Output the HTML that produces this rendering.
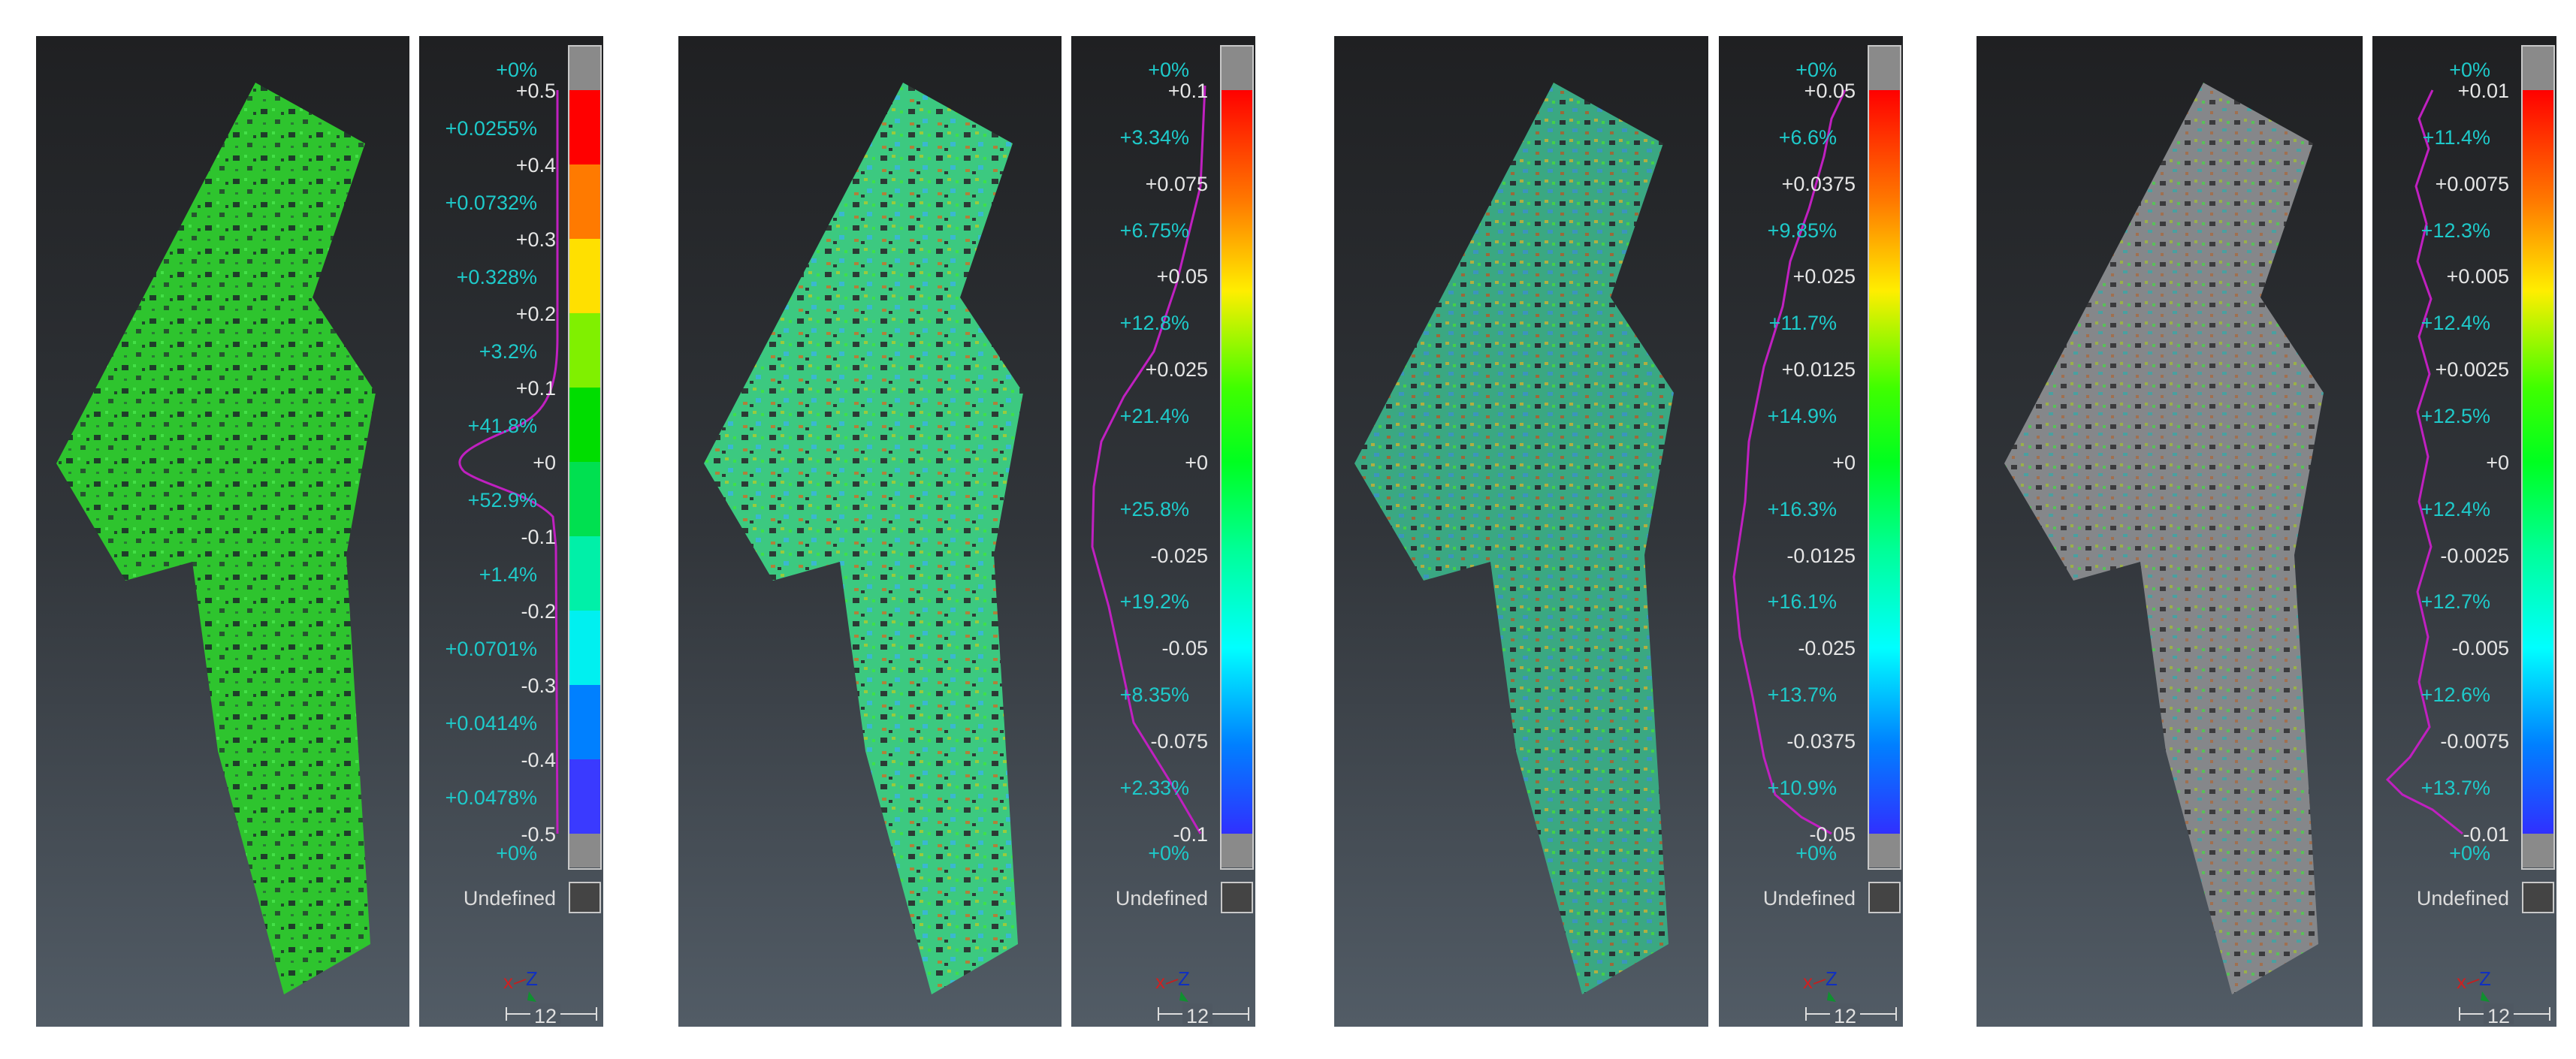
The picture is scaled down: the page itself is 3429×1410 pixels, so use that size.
<!DOCTYPE html>
<html><head><meta charset="utf-8"><style>html,body{margin:0;padding:0;background:#fff}svg{display:block}</style></head>
<body>
<svg width="3429" height="1410" viewBox="0 0 3429 1410" xmlns="http://www.w3.org/2000/svg" font-family="Liberation Sans, sans-serif">
<defs>
<linearGradient id="bg" x1="0" y1="0" x2="0" y2="1"><stop offset="0" stop-color="#1f2022"/><stop offset="0.5" stop-color="#31353a"/><stop offset="1" stop-color="#525c66"/></linearGradient>
<linearGradient id="cb" x1="0" y1="0" x2="0" y2="1">
<stop offset="0" stop-color="#ff0000"/><stop offset="0.15" stop-color="#ff7a00"/><stop offset="0.27" stop-color="#ffee00"/><stop offset="0.4" stop-color="#40ff00"/><stop offset="0.5" stop-color="#00ff20"/><stop offset="0.62" stop-color="#00ff99"/><stop offset="0.75" stop-color="#00ffff"/><stop offset="0.88" stop-color="#0080ff"/><stop offset="1" stop-color="#3030ff"/></linearGradient>
<pattern id="p1" width="37" height="31" patternUnits="userSpaceOnUse"><rect width="37" height="31" fill="#2ec42e"/><rect x="3" y="4" width="9" height="7" fill="#1f3d2a"/><rect x="22" y="18" width="7" height="6" fill="#26552f"/><rect x="18" y="3" width="4" height="4" fill="#44e048"/><rect x="6" y="22" width="4" height="3" fill="#2a7a35"/><rect x="30" y="8" width="4" height="4" fill="#1f4a2a"/></pattern>
<pattern id="p2" width="37" height="31" patternUnits="userSpaceOnUse"><rect width="37" height="31" fill="#3cc980"/><rect x="3" y="4" width="9" height="7" fill="#2c3a34"/><rect x="22" y="17" width="7" height="6" fill="#3ab8d0"/><rect x="18" y="3" width="5" height="4" fill="#9acb3c"/><rect x="5" y="22" width="6" height="4" fill="#b0803a"/><rect x="29" y="6" width="4" height="4" fill="#3ee04a"/><rect x="14" y="25" width="5" height="4" fill="#2d3b36"/></pattern>
<pattern id="p3" width="33" height="27" patternUnits="userSpaceOnUse"><rect width="33" height="27" fill="#3aa882"/><rect x="3" y="4" width="8" height="6" fill="#2b3232"/><rect x="20" y="15" width="7" height="5" fill="#3b95bd"/><rect x="16" y="2" width="5" height="4" fill="#b0b040"/><rect x="4" y="19" width="5" height="4" fill="#9a6a3a"/><rect x="26" y="5" width="4" height="4" fill="#44d04a"/></pattern>
<pattern id="p4" width="33" height="27" patternUnits="userSpaceOnUse"><rect width="33" height="27" fill="#85878a"/><rect x="3" y="4" width="8" height="6" fill="#3a3a3c"/><rect x="20" y="15" width="6" height="4" fill="#4aa0a0"/><rect x="16" y="2" width="4" height="4" fill="#9ab04a"/><rect x="4" y="19" width="4" height="4" fill="#a07050"/><rect x="26" y="5" width="4" height="4" fill="#5abf5a"/></pattern>
<g id="shape"><polygon points="292,62 438,143 368,348 452,475 413,691 445,1209 330,1276 242,952 208,700 119,725 27,569"/></g>
<g id="legbase">
<rect x="0" y="0" width="245" height="1319" fill="url(#bg)"/>
<rect x="199" y="13" width="43" height="1096" fill="none" stroke="#c8c8c8" stroke-width="2"/>
<rect x="200" y="14" width="41" height="58" fill="#8a8a8a"/>
<rect x="200" y="1062" width="41" height="45" fill="#8a8a8a"/>
<rect x="200" y="1127" width="41" height="40" fill="#444" stroke="#c8c8c8" stroke-width="2"/>
<text x="182" y="1157" font-size="27" fill="#dcdcdc" text-anchor="end">Undefined</text>
<text x="112" y="1268" font-size="26" fill="#d02020">x</text>
<line x1="126" y1="1262" x2="142" y2="1256" stroke="#c02020" stroke-width="2"/>
<text x="142" y="1264" font-size="26" fill="#1030c0">Z</text>
<path d="M146 1272 l10 14 l-12 -2 z" fill="#109030"/>
<line x1="116" y1="1302" x2="236" y2="1302" stroke="#ddd" stroke-width="2"/>
<line x1="116" y1="1293" x2="116" y2="1311" stroke="#ddd" stroke-width="2"/>
<line x1="236" y1="1293" x2="236" y2="1311" stroke="#ddd" stroke-width="2"/>
<rect x="148" y="1288" width="40" height="28" fill="#4f5862"/>
<text x="168" y="1314" font-size="27" fill="#e0e0e0" text-anchor="middle">12</text>
</g>
</defs>

<rect x="48" y="48" width="497" height="1319" fill="url(#bg)"/>
<g transform="translate(48,48)" fill="url(#p1)"><use href="#shape"/></g>
<g transform="translate(558,48)">
<use href="#legbase"/>
<rect x="200" y="72" width="41" height="99" fill="#ff0000"/>
<rect x="200" y="171" width="41" height="99" fill="#ff7a00"/>
<rect x="200" y="270" width="41" height="99" fill="#ffe000"/>
<rect x="200" y="369" width="41" height="99" fill="#80f000"/>
<rect x="200" y="468" width="41" height="99" fill="#00dd00"/>
<rect x="200" y="567" width="41" height="99" fill="#00e050"/>
<rect x="200" y="666" width="41" height="99" fill="#00f0a8"/>
<rect x="200" y="765" width="41" height="99" fill="#00f0f0"/>
<rect x="200" y="864" width="41" height="99" fill="#0080ff"/>
<rect x="200" y="963" width="41" height="99" fill="#3a3aff"/>
<path d="M184 72 L184 400 C184 470 170 500 130 520 C70 545 40 560 60 580 C90 600 150 610 178 640 L182 680 L184 1062" fill="none" stroke="#c020c0" stroke-width="3"/>
<g font-size="27" fill="#e6e6e6" text-anchor="end">
<text x="182" y="82">+0.5</text><text x="182" y="181">+0.4</text><text x="182" y="280">+0.3</text><text x="182" y="379">+0.2</text><text x="182" y="478">+0.1</text><text x="182" y="577">+0</text><text x="182" y="676">-0.1</text><text x="182" y="775">-0.2</text><text x="182" y="874">-0.3</text><text x="182" y="973">-0.4</text><text x="182" y="1072">-0.5</text></g>
<g font-size="27" fill="#1ecaca" text-anchor="end">
<text x="157" y="54">+0%</text><text x="157" y="132">+0.0255%</text><text x="157" y="231">+0.0732%</text><text x="157" y="330">+0.328%</text><text x="157" y="429">+3.2%</text><text x="157" y="528">+41.8%</text><text x="157" y="627">+52.9%</text><text x="157" y="726">+1.4%</text><text x="157" y="825">+0.0701%</text><text x="157" y="924">+0.0414%</text><text x="157" y="1023">+0.0478%</text><text x="157" y="1097">+0%</text></g>
</g>

<rect x="903" y="48" width="510" height="1319" fill="url(#bg)"/>
<g transform="translate(910,48)" fill="url(#p2)"><use href="#shape"/></g>
<g transform="translate(1426,48)">
<use href="#legbase"/>
<rect x="200" y="72" width="41" height="990" fill="url(#cb)"/>
<polyline points="178,66 172,200 140,330 110,420 70,480 40,540 30,600 28,680 50,760 83,914 130,990 172,1062" fill="none" stroke="#c020c0" stroke-width="3"/>
<g font-size="27" fill="#e6e6e6" text-anchor="end">
<text x="182" y="82">+0.1</text><text x="182" y="206">+0.075</text><text x="182" y="329">+0.05</text><text x="182" y="453">+0.025</text><text x="182" y="577">+0</text><text x="182" y="701">-0.025</text><text x="182" y="824">-0.05</text><text x="182" y="948">-0.075</text><text x="182" y="1072">-0.1</text></g>
<g font-size="27" fill="#1ecaca" text-anchor="end">
<text x="157" y="54">+0%</text><text x="157" y="144">+3.34%</text><text x="157" y="268">+6.75%</text><text x="157" y="391">+12.8%</text><text x="157" y="515">+21.4%</text><text x="157" y="639">+25.8%</text><text x="157" y="762">+19.2%</text><text x="157" y="886">+8.35%</text><text x="157" y="1010">+2.33%</text><text x="157" y="1097">+0%</text></g>
</g>

<rect x="1776" y="48" width="498" height="1319" fill="url(#bg)"/>
<g transform="translate(1776,48)" fill="url(#p3)"><use href="#shape"/></g>
<g transform="translate(2288,48)">
<use href="#legbase"/>
<rect x="200" y="72" width="41" height="990" fill="url(#cb)"/>
<polyline points="168,72 150,110 140,160 120,230 95,300 85,360 60,440 40,540 35,620 20,720 28,800 45,880 60,960 75,1010 110,1040 150,1062" fill="none" stroke="#c020c0" stroke-width="3"/>
<g font-size="27" fill="#e6e6e6" text-anchor="end">
<text x="182" y="82">+0.05</text><text x="182" y="206">+0.0375</text><text x="182" y="329">+0.025</text><text x="182" y="453">+0.0125</text><text x="182" y="577">+0</text><text x="182" y="701">-0.0125</text><text x="182" y="824">-0.025</text><text x="182" y="948">-0.0375</text><text x="182" y="1072">-0.05</text></g>
<g font-size="27" fill="#1ecaca" text-anchor="end">
<text x="157" y="54">+0%</text><text x="157" y="144">+6.6%</text><text x="157" y="268">+9.85%</text><text x="157" y="391">+11.7%</text><text x="157" y="515">+14.9%</text><text x="157" y="639">+16.3%</text><text x="157" y="762">+16.1%</text><text x="157" y="886">+13.7%</text><text x="157" y="1010">+10.9%</text><text x="157" y="1097">+0%</text></g>
</g>

<rect x="2631" y="48" width="514" height="1319" fill="url(#bg)"/>
<g transform="translate(2641,48)" fill="url(#p4)"><use href="#shape"/></g>
<g transform="translate(3158,48)">
<use href="#legbase"/>
<rect x="200" y="72" width="41" height="990" fill="url(#cb)"/>
<polyline points="80,72 62,110 75,150 58,200 72,250 60,300 78,350 62,400 76,450 60,500 74,560 62,620 78,680 60,740 74,800 62,860 76,920 50,960 20,990 40,1010 80,1030 120,1062" fill="none" stroke="#c020c0" stroke-width="3"/>
<g font-size="27" fill="#e6e6e6" text-anchor="end">
<text x="182" y="82">+0.01</text><text x="182" y="206">+0.0075</text><text x="182" y="329">+0.005</text><text x="182" y="453">+0.0025</text><text x="182" y="577">+0</text><text x="182" y="701">-0.0025</text><text x="182" y="824">-0.005</text><text x="182" y="948">-0.0075</text><text x="182" y="1072">-0.01</text></g>
<g font-size="27" fill="#1ecaca" text-anchor="end">
<text x="157" y="54">+0%</text><text x="157" y="144">+11.4%</text><text x="157" y="268">+12.3%</text><text x="157" y="391">+12.4%</text><text x="157" y="515">+12.5%</text><text x="157" y="639">+12.4%</text><text x="157" y="762">+12.7%</text><text x="157" y="886">+12.6%</text><text x="157" y="1010">+13.7%</text><text x="157" y="1097">+0%</text></g>
</g>
</svg>
</body></html>
